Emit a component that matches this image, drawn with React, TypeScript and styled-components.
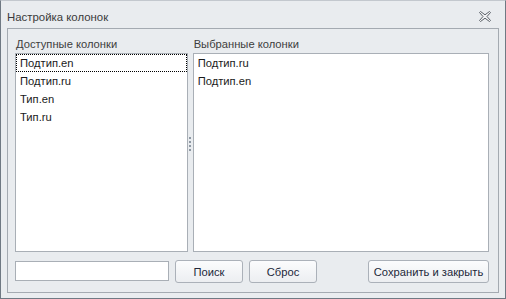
import React from "react";
import styled, { createGlobalStyle } from "styled-components";

const Global = createGlobalStyle`
  html, body { margin: 0; padding: 0; background: #e9ecef; }
  body { font-family: "Liberation Sans", Arial, sans-serif; }
  * { box-sizing: border-box; }
`;

const Window = styled.div`
  width: 506px;
  height: 299px;
  background: #e9ecef;
  border: 1px solid #6f7983;
  border-top-color: #c3c8ce;
  display: flex;
  flex-direction: column;
  font-family: "Liberation Sans", Arial, sans-serif;
  font-size: 11.2px;
`;

const TitleBar = styled.div`
  height: 27px;
  flex: none;
  display: flex;
  align-items: center;
  justify-content: space-between;
  padding: 4px 14px 0 6px;
  color: #3a3a3a;
  font-size: 11.4px;
`;

const CloseButton = styled.button`
  width: 13px;
  height: 12px;
  padding: 0;
  border: none;
  background: transparent;
  display: flex;
  align-items: center;
  justify-content: center;
`;

const Panel = styled.div`
  flex: 1;
  margin: 0 6px 5px 6px;
  border: 1px solid #a4aab1;
  padding: 8px 9px 9px 7px;
  display: flex;
  flex-direction: column;
`;

const Columns = styled.div`
  display: flex;
  flex: none;
`;

const Column = styled.div<{ $width: number }>`
  width: ${(p) => p.$width}px;
  display: flex;
  flex-direction: column;
`;

const Label = styled.div`
  height: 15px;
  line-height: 15px;
  margin-bottom: 1px;
  padding-left: 1px;
  color: #3d3d3d;
  white-space: nowrap;
`;

const ListBox = styled.div`
  height: 199px;
  background: #ffffff;
  border: 1px solid #a9afb6;
  display: flex;
  flex-direction: column;
`;

const Item = styled.div<{ $focused?: boolean }>`
  height: 18px;
  line-height: 16px;
  padding: 0 3px;
  border: 1px dotted ${(p) => (p.$focused ? "#000" : "transparent")};
  color: #1a1a1a;
  white-space: nowrap;
`;

const Splitter = styled.div`
  width: 5px;
  margin-top: 16px;
  height: 199px;
  display: flex;
  flex-direction: column;
  align-items: center;
  justify-content: center;
  gap: 2px;
  padding-bottom: 17px;
`;

const Dot = styled.span`
  width: 2px;
  height: 2px;
  background: #8e98a3;
`;

const BottomRow = styled.div`
  margin-top: 8px;
  height: 23px;
  display: flex;
  align-items: center;
  gap: 6px;
`;

const SearchInput = styled.input`
  width: 154px;
  height: 20px;
  border: 1px solid #a9afb6;
  background: #fff;
  outline: none;
  padding: 0 3px;
  font-family: inherit;
  font-size: inherit;
  margin-bottom: 2px;
`;

const Button = styled.button<{ $width: number; $push?: boolean }>`
  width: ${(p) => p.$width}px;
  height: 23px;
  margin-left: ${(p) => (p.$push ? "auto" : "0")};
  border: 1px solid #abb1b9;
  border-radius: 3px;
  background: linear-gradient(#fbfcfd, #eceef1);
  font-family: inherit;
  font-size: inherit;
  color: #22283a;
  padding: 0;
`;

const CloseIcon = () => (
  <svg width="12" height="11" viewBox="0 0 12 11">
    <path
      d="M0.5 1.5 L1.5 0.5 L6 3.8 L10.5 0.5 L11.5 1.5 L8 5.5 L11.5 9.5 L10.5 10.5 L6 7.2 L1.5 10.5 L0.5 9.5 L4 5.5 Z"
      fill="#f2f3f5"
      stroke="#5b6168"
      strokeWidth="1"
      strokeLinejoin="miter"
    />
  </svg>
);

const available = ["Подтип.en", "Подтип.ru", "Тип.en", "Тип.ru"];
const selected = ["Подтип.ru", "Подтип.en"];

export default function App() {
  return (
    <>
      <Global />
      <Window>
        <TitleBar>
          <span>Настройка колонок</span>
          <CloseButton aria-label="Закрыть">
            <CloseIcon />
          </CloseButton>
        </TitleBar>
        <Panel>
          <Columns>
            <Column $width={173}>
              <Label>Доступные колонки</Label>
              <ListBox>
                {available.map((t, i) => (
                  <Item key={t} $focused={i === 0}>
                    {t}
                  </Item>
                ))}
              </ListBox>
            </Column>
            <Splitter>
              <Dot />
              <Dot />
              <Dot />
              <Dot />
            </Splitter>
            <Column $width={297}>
              <Label>Выбранные колонки</Label>
              <ListBox>
                {selected.map((t) => (
                  <Item key={t}>{t}</Item>
                ))}
              </ListBox>
            </Column>
          </Columns>
          <BottomRow>
            <SearchInput />
            <Button $width={68}>Поиск</Button>
            <Button $width={68}>Сброс</Button>
            <Button $width={121} $push>
              Сохранить и закрыть
            </Button>
          </BottomRow>
        </Panel>
      </Window>
    </>
  );
}
